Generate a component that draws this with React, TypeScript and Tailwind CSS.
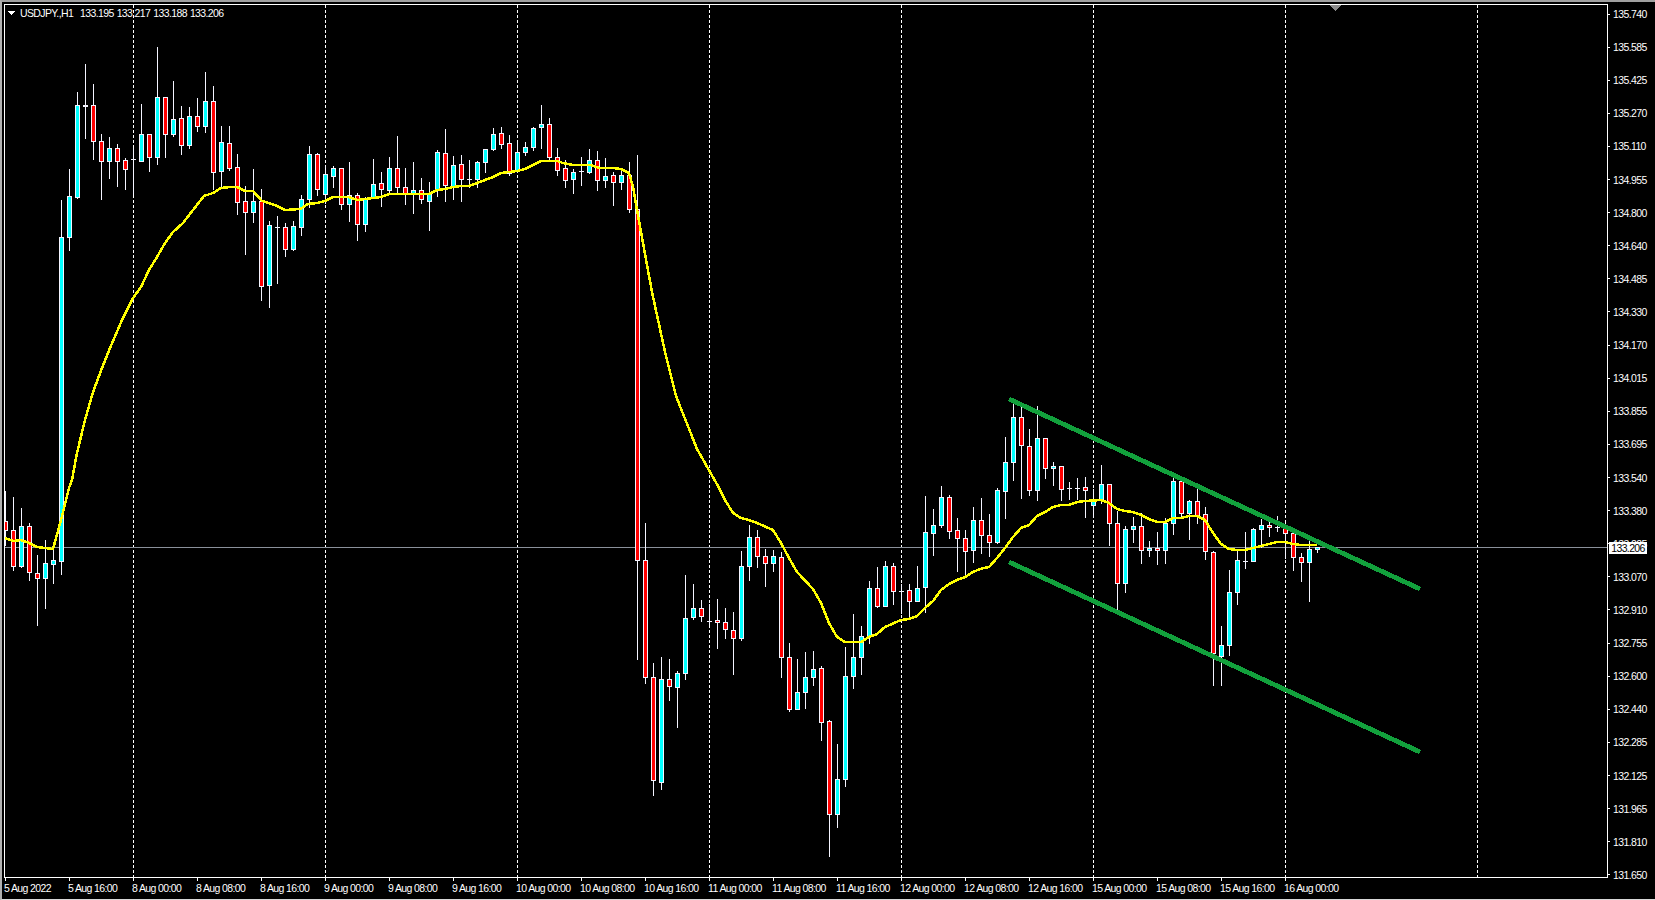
type Candle = [number, number, number, number, "c" | "r" | "d"];

// hi, lo, body top, body bottom (page pixels), one bar every 8px from x=5
const candles: Candle[] = [
  [491, 545, 521, 530, "r"], [497, 570, 530, 566, "r"], [508, 567, 526, 566, "c"], [523, 580, 526, 572, "r"],
  [555, 625, 573, 578, "r"], [540, 608, 563, 578, "c"], [548, 583, 560, 564, "c"], [200, 574, 237, 561, "c"],
  [169, 250, 196, 237, "c"], [92, 198, 105, 197, "c"], [64, 138, 105, 106, "d"], [84, 159, 105, 141, "r"],
  [134, 199, 141, 161, "r"], [137, 178, 148, 161, "c"], [144, 186, 148, 161, "r"], [158, 189, 160, 169, "r"],
  [148, 194, 159, 159, "d"], [104, 161, 134, 161, "c"], [134, 171, 134, 157, "r"], [47, 164, 97, 157, "c"],
  [97, 157, 97, 134, "r"], [81, 136, 119, 134, "c"], [106, 154, 118, 145, "r"], [107, 148, 116, 145, "c"],
  [98, 131, 116, 126, "r"], [72, 132, 101, 126, "c"], [86, 189, 101, 172, "r"], [126, 188, 142, 171, "c"],
  [126, 170, 143, 168, "r"], [154, 214, 167, 202, "r"], [186, 254, 201, 212, "r"], [169, 222, 201, 212, "c"],
  [189, 300, 201, 286, "r"], [221, 307, 225, 285, "c"], [216, 283, 227, 227, "d"], [223, 256, 227, 249, "r"],
  [221, 250, 226, 249, "c"], [195, 235, 199, 227, "c"], [146, 207, 154, 199, "c"], [153, 195, 154, 189, "r"],
  [166, 203, 174, 194, "c"], [166, 187, 168, 176, "c"], [168, 209, 168, 204, "r"], [162, 221, 195, 204, "c"],
  [193, 240, 195, 224, "r"], [197, 231, 199, 224, "c"], [159, 198, 184, 198, "c"], [172, 206, 183, 189, "r"],
  [157, 193, 168, 190, "c"], [136, 192, 168, 187, "r"], [168, 204, 187, 193, "r"], [162, 213, 190, 194, "c"],
  [178, 203, 190, 199, "r"], [182, 230, 193, 201, "c"], [150, 196, 152, 190, "c"], [129, 201, 153, 185, "r"],
  [156, 199, 165, 186, "c"], [155, 201, 164, 179, "r"], [160, 187, 179, 179, "d"], [161, 187, 162, 179, "c"],
  [149, 172, 149, 162, "c"], [128, 150, 134, 149, "c"], [127, 148, 133, 144, "r"], [135, 175, 143, 173, "r"],
  [142, 172, 152, 170, "c"], [142, 155, 147, 152, "c"], [127, 150, 128, 147, "c"], [105, 148, 124, 127, "c"],
  [118, 159, 124, 157, "r"], [148, 175, 157, 170, "r"], [160, 187, 168, 180, "r"], [169, 193, 172, 179, "c"],
  [157, 185, 171, 171, "d"], [149, 173, 160, 172, "c"], [151, 190, 160, 180, "r"], [158, 187, 176, 180, "c"],
  [172, 205, 175, 182, "r"], [168, 189, 175, 182, "c"], [162, 212, 175, 209, "r"], [155, 659, 209, 560, "r"],
  [523, 683, 560, 677, "r"], [663, 795, 677, 780, "r"], [657, 789, 679, 782, "c"], [659, 700, 679, 686, "r"],
  [671, 727, 673, 687, "c"], [575, 679, 618, 673, "c"], [584, 619, 608, 617, "c"], [600, 621, 608, 616, "r"],
  [604, 624, 621, 621, "d"], [599, 648, 620, 622, "r"], [608, 638, 622, 629, "r"], [612, 674, 630, 638, "r"],
  [551, 640, 566, 638, "c"], [525, 580, 537, 566, "c"], [530, 567, 537, 556, "r"], [549, 586, 556, 563, "r"],
  [550, 571, 556, 563, "c"], [552, 677, 557, 657, "r"], [643, 711, 657, 709, "r"], [659, 709, 692, 709, "c"],
  [652, 708, 677, 692, "c"], [651, 685, 669, 677, "c"], [666, 740, 668, 722, "r"], [720, 856, 721, 814, "r"],
  [744, 827, 779, 814, "c"], [647, 786, 676, 779, "c"], [614, 688, 657, 676, "c"], [626, 674, 636, 657, "c"],
  [581, 643, 588, 636, "c"], [567, 607, 588, 606, "r"], [561, 606, 566, 606, "c"], [563, 604, 566, 591, "r"],
  [584, 613, 591, 591, "d"], [584, 616, 590, 601, "r"], [566, 601, 588, 601, "c"], [496, 612, 532, 587, "c"],
  [509, 555, 525, 533, "c"], [486, 527, 497, 525, "c"], [495, 538, 497, 531, "r"], [518, 571, 530, 538, "r"],
  [530, 577, 538, 551, "r"], [507, 562, 520, 550, "c"], [498, 553, 520, 535, "r"], [514, 556, 535, 542, "r"],
  [488, 543, 490, 542, "c"], [437, 518, 462, 491, "c"], [400, 480, 417, 462, "c"], [407, 498, 417, 445, "r"],
  [429, 495, 446, 490, "r"], [406, 500, 438, 490, "c"], [438, 478, 438, 468, "r"], [462, 485, 466, 468, "c"],
  [466, 500, 466, 489, "r"], [482, 499, 488, 488, "d"], [478, 499, 488, 488, "d"], [477, 517, 487, 490, "r"],
  [489, 517, 501, 505, "c"], [465, 503, 484, 499, "c"], [484, 545, 484, 523, "r"], [511, 609, 523, 583, "r"],
  [526, 592, 529, 583, "c"], [517, 542, 526, 529, "c"], [513, 563, 526, 550, "r"], [541, 556, 548, 550, "c"],
  [532, 564, 548, 550, "r"], [518, 563, 523, 550, "c"], [477, 534, 481, 523, "c"], [481, 517, 481, 513, "r"],
  [500, 539, 501, 513, "c"], [488, 523, 501, 516, "r"], [507, 559, 514, 551, "r"], [551, 685, 552, 653, "r"],
  [626, 685, 645, 656, "c"], [570, 655, 592, 645, "c"], [549, 604, 560, 592, "c"], [532, 568, 561, 561, "d"],
  [528, 561, 529, 561, "c"], [519, 547, 525, 529, "c"], [521, 536, 525, 527, "r"], [516, 531, 527, 527, "d"],
  [523, 558, 527, 533, "r"], [533, 570, 533, 557, "r"], [553, 581, 557, 562, "r"], [539, 601, 549, 562, "c"],
  [547, 552, 547, 549, "c"],
];

const ma =
  "5,538 13,541 21,540 29,543 37,547 45,548 53,549 61,520 69,488 72,480 77,453 85,420 93,392 102,368 110,348 122,320 133,298 141,287 149,270 157,257 165,243 173,232 183,223 193,210 204,196 213,193 221,188 230,187 237,187 245,191 253,191 262,201 269,203 277,206 285,210 300,209 308,204 317,203 325,201 333,197 349,197 357,200 365,199 381,197 389,194 429,194 437,190 445,189 453,187 461,186 469,186 477,183 485,180 493,177 501,173 509,172 517,171 525,169 533,165 541,161 557,161 563,163 573,165 590,165 600,168 613,168 621,169 629,173 633,187 637,210 643,243 652,292 665,352 676,396 697,449 718,486 725,500 733,513 741,518 749,520 757,523 773,530 781,543 789,558 797,572 813,589 821,603 829,623 837,637 845,642 861,642 869,637 877,634 885,627 901,620 909,619 917,616 925,608 933,601 941,590 949,584 957,580 965,577 973,572 980,569 989,567 997,558 1005,548 1013,537 1021,528 1029,525 1037,516 1045,512 1053,507 1061,505 1069,505 1077,502 1085,501 1101,500 1109,503 1117,509 1125,511 1133,512 1141,515 1149,519 1157,522 1165,522 1173,518 1181,518 1189,516 1197,516 1205,520 1213,533 1221,544 1229,549 1237,550 1245,550 1253,548 1261,546 1269,544 1277,542 1285,542 1293,544 1301,545 1317,545";

const gridX = [133, 325, 517, 709, 901, 1093, 1285, 1477];

const prices = [
  "135.740", "135.585", "135.425", "135.270", "135.110", "134.955", "134.800", "134.640", "134.485",
  "134.330", "134.170", "134.015", "133.855", "133.695", "133.540", "133.380", "133.225", "133.070",
  "132.910", "132.755", "132.600", "132.440", "132.285", "132.125", "131.965", "131.810", "131.650",
];

const dates = [
  "5 Aug 2022", "5 Aug 16:00", "8 Aug 00:00", "8 Aug 08:00", "8 Aug 16:00", "9 Aug 00:00", "9 Aug 08:00",
  "9 Aug 16:00", "10 Aug 00:00", "10 Aug 08:00", "10 Aug 16:00", "11 Aug 00:00", "11 Aug 08:00", "11 Aug 16:00",
  "12 Aug 00:00", "12 Aug 08:00", "12 Aug 16:00", "15 Aug 00:00", "15 Aug 08:00", "15 Aug 16:00", "16 Aug 00:00",
];

function Bar({ candle, x }: { candle: Candle; x: number }) {
  const [hi, lo, top, bottom, kind] = candle;
  const h = bottom - top + 1;
  return (
    <g>
      <rect x={x} y={hi} width={1} height={lo - hi + 1} fill="#f4f4ff" />
      <rect x={x - 2} y={top} width={5} height={h} fill="#f4f4ff" />
      {kind !== "d" && h > 2 ? (
        <rect x={x - 1} y={top + 1} width={3} height={h - 2} fill={kind === "c" ? "#00ffff" : "#ff0000"} />
      ) : null}
    </g>
  );
}

function ChartDrawing() {
  return (
    <svg width={1602} height={872} viewBox="5 5 1602 872" shapeRendering="crispEdges" className="block">
      {gridX.map((x) => (
        <line key={x} x1={x + 0.5} y1={5} x2={x + 0.5} y2={877} stroke="#ffffff" strokeDasharray="3 2" />
      ))}
      <rect x={5} y={547} width={1602} height={1} fill="#8a909a" />
      {candles.map((c, i) => (
        <Bar key={i} candle={c} x={5 + i * 8} />
      ))}
      <polyline points={ma} fill="none" stroke="#ffff00" strokeWidth={2.5} />
      <line x1={1009} y1={399} x2={1420} y2={589} stroke="#12a03c" strokeWidth={4.8} />
      <line x1={1009} y1={562} x2={1420} y2={752} stroke="#12a03c" strokeWidth={4.8} />
      <polygon points="8,11 15.5,11 11.7,15" fill="#ffffff" />
      <polygon points="1329,5 1341,5 1335,11" fill="#8a8a8a" />
    </svg>
  );
}

export default function App() {
  return (
    <div className="relative flex h-[900px] w-[1655px] flex-col overflow-hidden border-t-2 border-b border-l-2 border-t-[#a0a0a0] border-b-[#d8d8d8] border-l-[#b0b0b0] bg-black font-['Liberation_Sans',sans-serif] text-[10.5px] tracking-[-0.62px] text-white">
      <div className="flex h-[876px] shrink-0 items-start pt-[2px] pl-[2px]">
        <div className="relative h-[874px] w-[1604px] shrink-0 border border-white">
          <ChartDrawing />
          <div className="absolute top-[2px] left-[15px] flex h-3 items-center gap-[3px] leading-3">
            <span className="mr-[3px] w-[54px]">USDJPY.,H1</span>
            <span>133.195</span>
            <span>133.217</span>
            <span>133.188</span>
            <span>133.206</span>
          </div>
        </div>
        <div className="relative mt-[4px] flex h-[873px] flex-col justify-between">
          {prices.map((p) => (
            <div key={p} className="flex h-3 items-center leading-3">
              <div className="h-px w-[2px] bg-white" />
              <span className="ml-[3px]">{p}</span>
            </div>
          ))}
          <div className="absolute top-[534px] left-px flex h-3 w-[38px] items-center justify-center bg-white leading-3 text-black">
            133.206
          </div>
        </div>
      </div>
      <div className="flex pl-[2px]">
        {dates.map((d) => (
          <div key={d} className="w-[64px] shrink-0">
            <div className="ml-px h-[3px] w-px bg-white" />
            <div className="mt-[1px] whitespace-nowrap leading-3">{d}</div>
          </div>
        ))}
      </div>
    </div>
  );
}
